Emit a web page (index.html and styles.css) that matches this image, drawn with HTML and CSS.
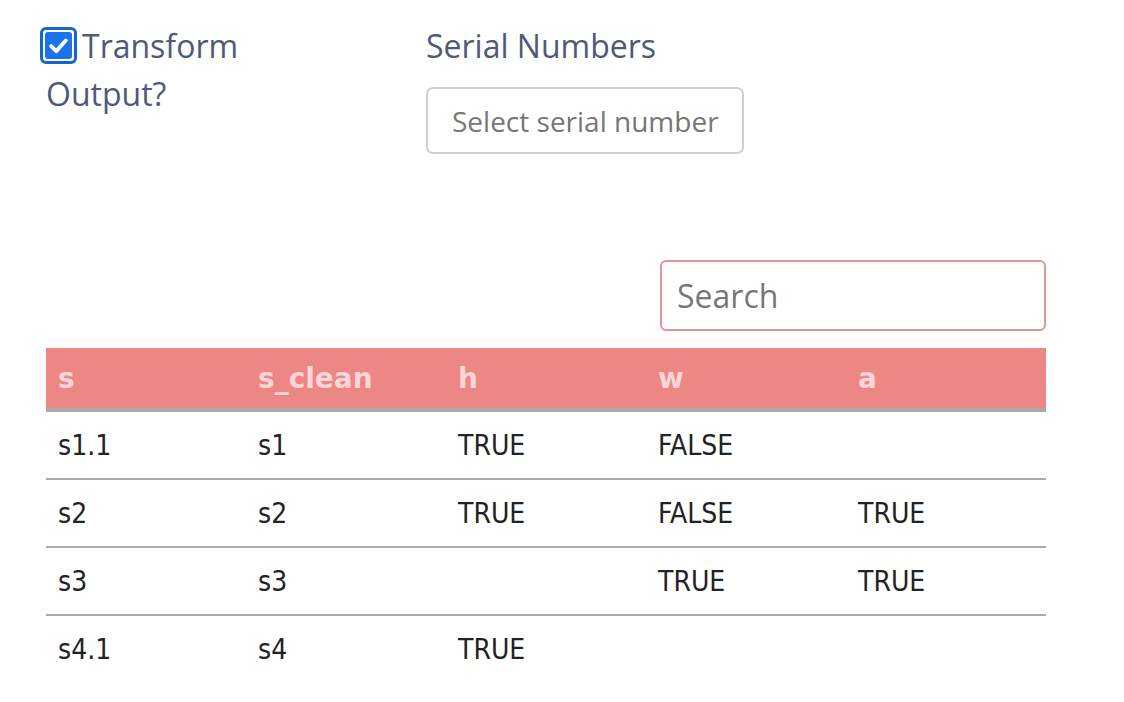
FILE: index.html
```html
<!DOCTYPE html>
<html>
<head>
<meta charset="utf-8">
<link rel="stylesheet" href="styles.css">
</head>
<body>
<div class="page">
  <div class="controls">
    <div class="check-group">
      <label class="check-label"><span class="checkbox"><svg viewBox="0 0 24 24" width="22" height="22"><path d="M5.5 12.5l4.5 4.5L18.5 7.5" fill="none" stroke="#fff" stroke-width="3.4" stroke-linecap="round" stroke-linejoin="round"/></svg></span>Transform Output?</label>
    </div>
    <div class="select-group">
      <div class="field-label">Serial Numbers</div>
      <div class="select-box">Select serial number</div>
    </div>
  </div>
  <div class="table-tools">
    <div class="search">Search</div>
  </div>
  <table class="data">
    <thead>
      <tr><th>s</th><th>s_clean</th><th>h</th><th>w</th><th>a</th></tr>
    </thead>
    <tbody>
      <tr><td>s1.1</td><td>s1</td><td>TRUE</td><td>FALSE</td><td></td></tr>
      <tr><td>s2</td><td>s2</td><td>TRUE</td><td>FALSE</td><td>TRUE</td></tr>
      <tr><td>s3</td><td>s3</td><td></td><td>TRUE</td><td>TRUE</td></tr>
      <tr><td>s4.1</td><td>s4</td><td>TRUE</td><td></td><td></td></tr>
    </tbody>
  </table>
</div>
</body>
</html>
```
FILE: styles.css
```css
html, body { margin: 0; padding: 0; background: #fff; }
.page { padding: 22px 0 0 46px; width: 1000px; }
.controls { display: flex; height: 238px; }
.check-group { width: 380px; }
.check-label {
  font-family: "Open Sans", sans-serif;
  font-size: 32px;
  line-height: 48px;
  color: #4e5a78;
  display: block;
  width: 200px;
}
.checkbox {
  display: inline-block;
  box-sizing: border-box;
  width: 37px; height: 37px;
  margin-left: -6px;
  margin-right: 5px;
  border: 3px solid #1565d0;
  border-radius: 6px;
  padding: 2px;
  vertical-align: -6px;
}
.checkbox svg {
  display: block;
  width: 27px; height: 27px;
  background: #1a73e8;
  border-radius: 3px;
}
.select-group { display: flex; flex-direction: column; }
.field-label {
  font-family: "Open Sans", sans-serif;
  font-size: 32px;
  line-height: 48px;
  color: #4e5a78;
}
.select-box {
  margin-top: 17px;
  box-sizing: border-box;
  width: 318px; height: 67px;
  border: 2px solid #cfcfcf;
  border-radius: 7px;
  font-family: "Open Sans", sans-serif;
  font-size: 28px;
  color: #767676;
  padding-left: 24px;
  display: flex; align-items: center;
}
.table-tools { display: flex; justify-content: flex-end; height: 88px; }
.search {
  box-sizing: border-box;
  width: 386px; height: 71px;
  border: 2px solid #e09696;
  border-radius: 6px;
  font-family: "Open Sans", sans-serif;
  font-size: 32px;
  color: #777;
  padding-left: 15px;
  display: flex; align-items: center;
}
.data {
  border-collapse: collapse;
  width: 1000px;
}
.data th {
  font-family: "DejaVu Sans", sans-serif;
  background: #ed8785;
  color: #fcd6d6;
  font-weight: bold;
  font-size: 28px;
  text-align: left;
  height: 62px;
  padding: 0 12px;
  border-bottom: 4px solid #aaaaaa;
  width: 200px;
  box-sizing: border-box;
}
.data td {
  font-family: "DejaVu Sans Condensed", "DejaVu Sans", sans-serif;
  font-size: 28px;
  color: #222;
  height: 66px;
  padding: 0 12px;
  border-bottom: 2px solid #aaaaaa;
}
.data tbody tr:last-child td { border-bottom: none; }
```
